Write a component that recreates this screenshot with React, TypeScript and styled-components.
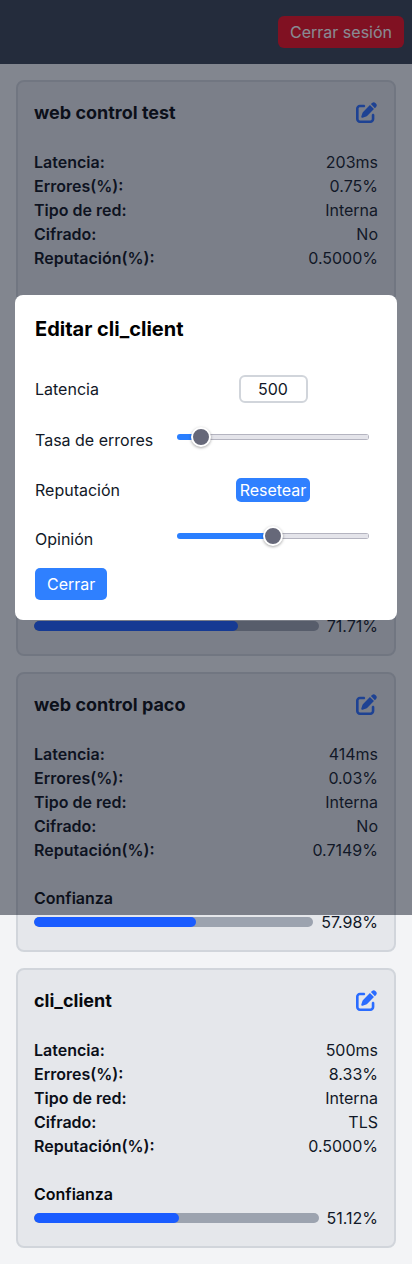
import styled, { createGlobalStyle } from "styled-components";
import { FaPenToSquare } from "react-icons/fa6";

const GlobalStyle = createGlobalStyle`
  * {
    box-sizing: border-box;
  }
  body {
    margin: 0;
    background: #f3f4f6;
    color: #111827;
    font-family: Inter, "Noto Sans", sans-serif;
    font-size: 16px;
    line-height: 24px;
  }
`;

const Page = styled.div`
  position: relative;
  min-height: 1264px;
`;

const Navbar = styled.nav`
  height: 64px;
  display: flex;
  justify-content: flex-end;
  align-items: center;
  padding: 0 8px;
  background: #374151;
`;

const LogoutButton = styled.button`
  height: 32px;
  padding: 0 12px;
  border: none;
  border-radius: 6px;
  background: #ee0a1c;
  color: white;
  font: inherit;
`;

const CardList = styled.main`
  display: flex;
  flex-direction: column;
  gap: 16px;
  padding: 16px;
`;

const Card = styled.section`
  height: 280px;
  padding: 16px;
  border: 2px solid #d1d5db;
  border-radius: 8px;
  background: #e5e7eb;
`;

const CardHeader = styled.div`
  display: flex;
  justify-content: space-between;
  align-items: center;
  height: 28px;
  margin-bottom: 24px;
`;

const CardTitle = styled.h2`
  margin: 1px 0 0;
  font-size: 18px;
  line-height: 28px;
  font-weight: 700;
  color: #07090d;
`;

const EditButton = styled.button`
  display: flex;
  margin-right: 1px;
  padding: 0;
  border: none;
  background: transparent;
  color: #2a6cff;
  font-size: 21px;
`;

const StatRow = styled.div`
  display: flex;
  justify-content: space-between;
  height: 24px;
`;

const StatLabel = styled.span<{ $raised?: boolean }>`
  font-weight: 600;
  color: #0b0f19;
  font-feature-settings: ${(props) => (props.$raised ? `"case"` : "normal")};
`;

const TrustTitle = styled.div`
  margin-top: 24px;
  font-weight: 600;
  color: #07090d;
`;

const TrustRow = styled.div`
  display: flex;
  align-items: center;
  gap: 8px;
`;

const TrustBar = styled.div`
  flex: 1;
  height: 10px;
  border-radius: 5px;
  background: #9ca3af;
  overflow: hidden;
`;

const TrustFill = styled.div`
  height: 100%;
  border-radius: 5px;
  background: #1a5cff;
`;

const Overlay = styled.div`
  position: absolute;
  top: 0;
  left: 0;
  width: 100%;
  height: 915px;
  display: flex;
  justify-content: center;
  align-items: center;
  background: rgba(17, 24, 39, 0.5);
`;

const Modal = styled.div`
  width: 382px;
  height: 325px;
  padding: 20px;
  border-radius: 8px;
  background: white;
`;

const ModalTitle = styled.h3`
  margin: 0 0 32px;
  font-size: 20px;
  line-height: 28px;
  font-weight: 700;
  color: black;
`;

const FieldList = styled.div`
  display: flex;
  flex-direction: column;
  gap: 25.33px;
  margin-bottom: 17px;
`;

const FieldRow = styled.div`
  display: grid;
  grid-template-columns: 142px 192px;
  align-items: center;
`;

const FieldControl = styled.div`
  display: flex;
  justify-content: center;
  align-self: start;
`;

const NumberInput = styled.input`
  width: 69px;
  height: 28px;
  padding: 0;
  border: 2px solid #d1d5db;
  border-radius: 6px;
  background: white;
  color: #111827;
  font: inherit;
  text-align: center;
`;

const Slider = styled.input`
  appearance: none;
  display: block;
  width: 192px;
  height: 18px;
  margin: 0;
  background: transparent;

  &::-webkit-slider-runnable-track {
    height: 6px;
    border-radius: 3px;
    background:
      linear-gradient(to right, #2a7fff var(--fill), transparent var(--fill)),
      linear-gradient(#e4e4ea, #e4e4ea) center / calc(100% - 2px) 4px no-repeat,
      #b4b4c0;
  }

  &::-webkit-slider-thumb {
    appearance: none;
    width: 20px;
    height: 20px;
    margin-top: -7px;
    border: 2px solid white;
    border-radius: 50%;
    background: #666879;
    box-shadow: 0 1px 3px rgba(0, 0, 0, 0.35);
  }
`;

const SmallButton = styled.button`
  height: 24px;
  padding: 0 4px;
  border: none;
  border-radius: 5px;
  background: #2f80ff;
  color: white;
  font: inherit;
`;

const CloseButton = styled.button`
  display: block;
  height: 32px;
  padding: 0 12px;
  border: none;
  border-radius: 5px;
  background: #2f80ff;
  color: white;
  font: inherit;
`;

const servers = [
  { name: "web control test", latency: "203ms", errors: "0.75%", network: "Interna", cipher: "No", reputation: "0.5000%", trust: 64.2 },
  { name: "web control", latency: "310ms", errors: "0.12%", network: "Interna", cipher: "No", reputation: "0.7171%", trust: 71.71 },
  { name: "web control paco", latency: "414ms", errors: "0.03%", network: "Interna", cipher: "No", reputation: "0.7149%", trust: 57.98 },
  { name: "cli_client", latency: "500ms", errors: "8.33%", network: "Interna", cipher: "TLS", reputation: "0.5000%", trust: 51.12 },
];

const Stat = ({ label, value, raised }: { label: string; value: string; raised?: boolean }) => (
  <StatRow>
    <StatLabel $raised={raised}>{label}</StatLabel>
    <span>{value}</span>
  </StatRow>
);

const RangeField = ({ label, value }: { label: string; value: number }) => (
  <FieldRow>
    <span>{label}</span>
    <FieldControl>
      <Slider
        type="range"
        min={0}
        max={100}
        defaultValue={value}
        style={{ "--fill": `${value}%` } as React.CSSProperties}
      />
    </FieldControl>
  </FieldRow>
);

export default function App() {
  return (
    <Page>
      <GlobalStyle />
      <Navbar>
        <LogoutButton>Cerrar sesión</LogoutButton>
      </Navbar>
      <CardList>
        {servers.map((server) => (
          <Card key={server.name}>
            <CardHeader>
              <CardTitle>{server.name}</CardTitle>
              <EditButton>
                <FaPenToSquare />
              </EditButton>
            </CardHeader>
            <Stat label="Latencia:" value={server.latency} />
            <Stat label="Errores(%):" value={server.errors} raised />
            <Stat label="Tipo de red:" value={server.network} />
            <Stat label="Cifrado:" value={server.cipher} />
            <Stat label="Reputación(%):" value={server.reputation} raised />
            <TrustTitle>Confianza</TrustTitle>
            <TrustRow>
              <TrustBar>
                <TrustFill style={{ width: `${server.trust}%` }} />
              </TrustBar>
              <span>{server.trust}%</span>
            </TrustRow>
          </Card>
        ))}
      </CardList>
      <Overlay>
        <Modal>
          <ModalTitle>Editar cli_client</ModalTitle>
          <FieldList>
            <FieldRow>
              <span>Latencia</span>
              <FieldControl>
                <NumberInput type="text" defaultValue="500" />
              </FieldControl>
            </FieldRow>
            <RangeField label="Tasa de errores" value={8.33} />
            <FieldRow>
              <span>Reputación</span>
              <FieldControl>
                <SmallButton>Resetear</SmallButton>
              </FieldControl>
            </FieldRow>
            <RangeField label="Opinión" value={50} />
          </FieldList>
          <CloseButton>Cerrar</CloseButton>
        </Modal>
      </Overlay>
    </Page>
  );
}
